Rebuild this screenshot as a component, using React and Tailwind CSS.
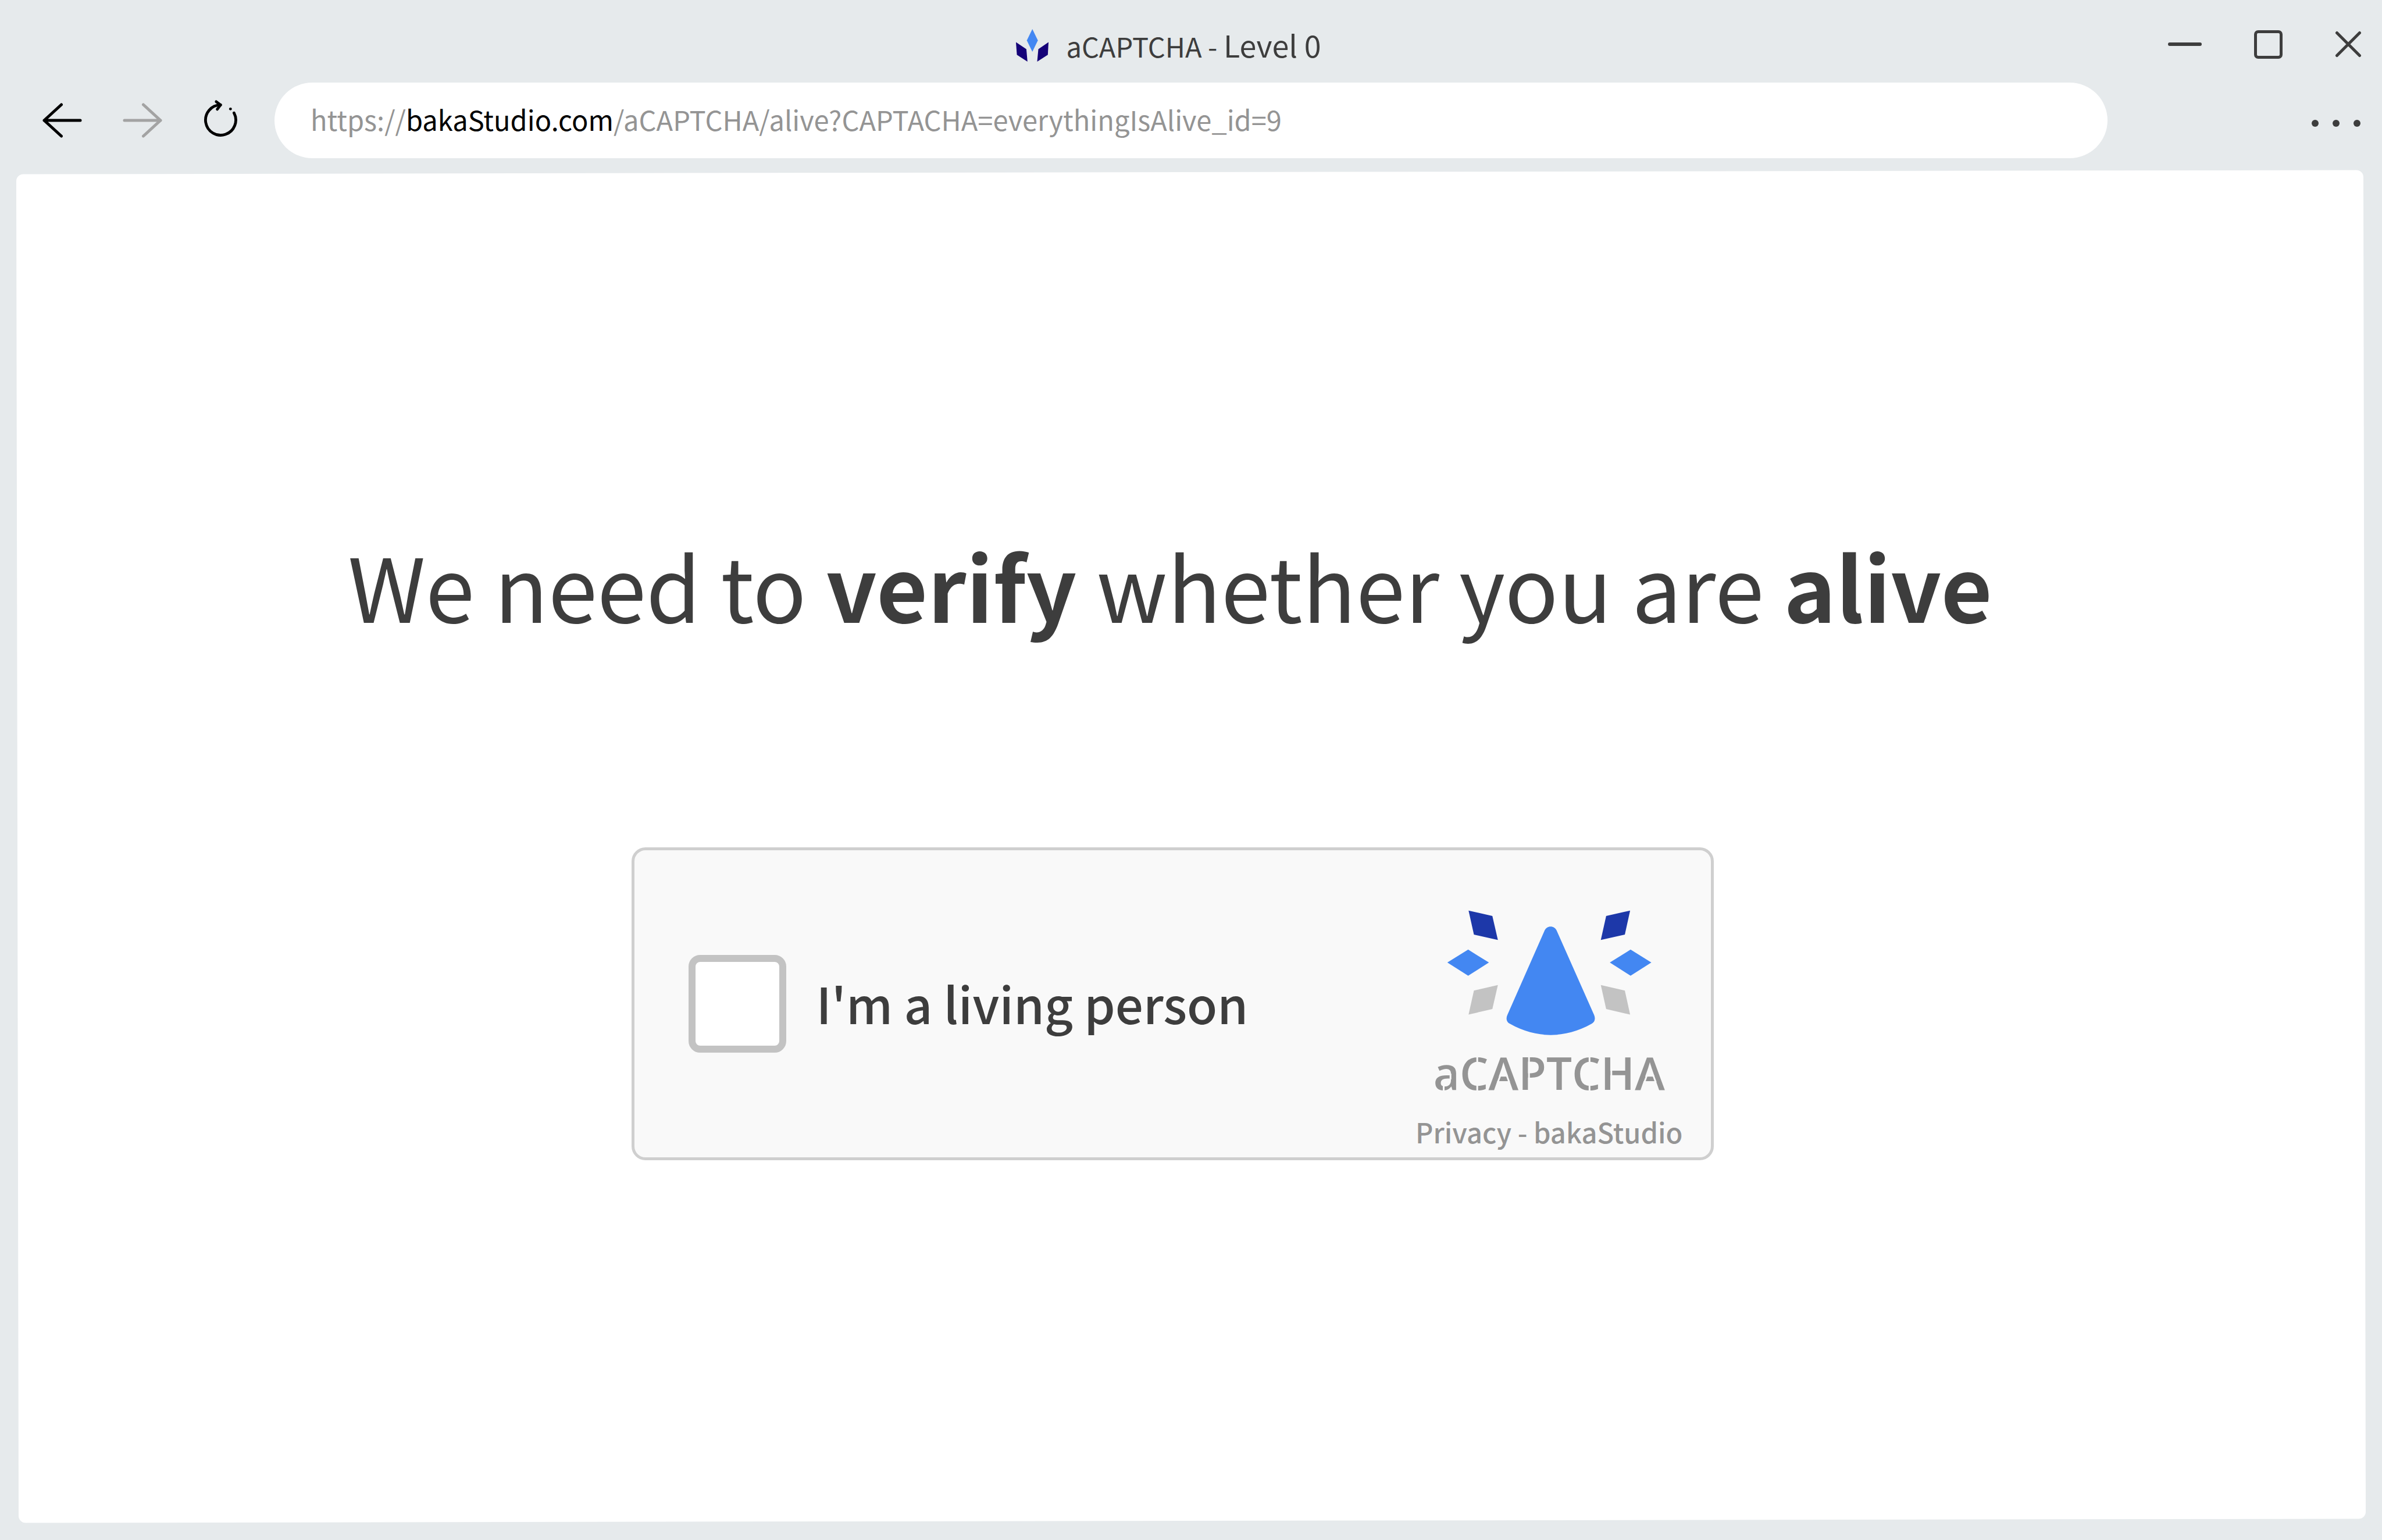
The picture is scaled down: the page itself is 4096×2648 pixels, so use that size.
const pageFont = '"Noto Sans CJK SC", "Noto Sans", sans-serif';

function TitleMark() {
  return (
    <svg width="56" height="56" viewBox="0 0 56 56" aria-hidden="true">
      <path d="M28.2 0L37.7 19.4 28.2 39.1 18.7 19.4Z" fill="#4387f2" />
      <path d="M0 22.5L17.9 34.4 19.8 56 1.6 44.2Z" fill="#150278" />
      <path d="M56 22.5L38.5 34.4 36.5 56 54.8 44.2Z" fill="#150278" />
    </svg>
  );
}

function ArrowIcon({ className }) {
  return (
    <svg
      className={className}
      width="68"
      height="60"
      viewBox="0 0 68 60"
      fill="none"
      stroke="currentColor"
      strokeWidth="5"
      strokeLinecap="round"
      strokeLinejoin="round"
      aria-hidden="true"
    >
      <path d="M65 30H3M32.500 3L3 30L32.500 57" />
    </svg>
  );
}

function ReloadIcon() {
  return (
    <svg
      width="60"
      height="72"
      viewBox="0 0 60 72"
      fill="none"
      stroke="currentColor"
      strokeWidth="4.800"
      strokeLinecap="round"
      strokeLinejoin="round"
      aria-hidden="true"
    >
      <path d="M53.400 23.200A26 26 0 1 1 30.400 9.400" />
      <path d="M22.800 3.800L30.200 9.400L24.600 16.900" />
      <circle cx="47.300" cy="16.300" r="2.400" fill="currentColor" stroke="none" />
    </svg>
  );
}

function Emblem() {
  return (
    <svg width="352" height="215" viewBox="0 0 352 215" aria-hidden="true">
      <g fill="#1d38a9">
        <path d="M37.300 .7L78.200 10 87.700 51.300 46.500 42Z" />
        <path d="M315.100 .7L273.900 10 264.700 51.300 306 42Z" />
      </g>
      <g fill="#4387f2">
        <path d="M.8 90.100L36.600 67.800 72.300 90.100 36.600 112.700Z" />
        <path d="M280.200 90.100L315.900 67.800 351.600 90.100 315.900 112.700Z" />
        <path d="M167.500 36.200C171.500 25.700 185.300 25.700 189.300 36.200L253.200 180.200C256 187 254 193 248.500 195.600C204 221 153 221 108.800 195.600C103 193 101 187 104 180.200Z" />
      </g>
      <g fill="#c3c3c3">
        <path d="M87.700 128.800L46.500 138.200 37.300 179.500 78.200 170.100Z" />
        <path d="M264.700 128.800L306 138.200 315.100 179.500 273.900 170.100Z" />
      </g>
    </svg>
  );
}

function TitleBar() {
  return (
    <header className="grid h-[142px] grid-cols-[1fr_auto_1fr] items-center pt-[14px] pr-[35px]">
      <span />
      <h1 className="flex items-center gap-[30px] pr-[42px] text-[47px] leading-[60px]">
        <TitleMark />
        <span>
          aCAPTCHA - <span className="text-[52px]">Level 0</span>
        </span>
      </h1>
      <div className="flex items-center justify-end gap-[90px] pb-1">
        <button type="button" aria-label="Minimize">
          <span className="block h-[6px] w-[58px] rounded-full bg-[#3d3d3d]" />
        </button>
        <button type="button" aria-label="Maximize">
          <span className="block size-[49px] rounded-[7px] border-[5px] border-[#3d3d3d]" />
        </button>
        <button type="button" aria-label="Close">
          <svg width="46" height="46" viewBox="0 0 46 46" stroke="currentColor" strokeWidth="5" strokeLinecap="round">
            <path d="M3.500 3.500L42.500 42.500M42.500 3.500L3.500 42.500" />
          </svg>
        </button>
      </div>
    </header>
  );
}

function Toolbar() {
  return (
    <nav className="flex h-[130px] items-center pr-[37px] pl-[73px]">
      <div className="flex items-center gap-[70px] text-black">
        <button type="button" aria-label="Back">
          <ArrowIcon />
        </button>
        <button type="button" aria-label="Forward" disabled className="text-[#a3a3a3]">
          <ArrowIcon className="rotate-180" />
        </button>
        <button type="button" aria-label="Reload">
          <ReloadIcon />
        </button>
      </div>
      <div className="relative mr-[351px] ml-[63px] flex h-full flex-1 items-center rounded-full bg-white pb-[5px] pl-[62px]">
        <label htmlFor="address" className="text-[47px] leading-[60px] whitespace-nowrap text-[#949494]">
          https://<span className="text-black">bakaStudio.com</span>
          /aCAPTCHA/alive?CAPTACHA=everythingIsAlive_id=9
        </label>
        <input
          id="address"
          type="text"
          className="absolute inset-0 size-full rounded-full bg-transparent px-[62px] text-[47px] text-black outline-none focus:bg-white"
        />
      </div>
      <button type="button" aria-label="Menu" className="flex gap-6 pt-[10px]">
        <span className="size-3 rounded-full bg-[#3d3d3d]" />
        <span className="size-3 rounded-full bg-[#3d3d3d]" />
        <span className="size-3 rounded-full bg-[#3d3d3d]" />
      </button>
    </nav>
  );
}

function LogoText() {
  return (
    <p className="relative font-['Open_Sans',sans-serif] text-[78px] leading-[72px] font-semibold text-[#949494]">
      aCAPTCHA
      {/* Stencil bridges cut through the strokes */}
      <svg
        className="absolute inset-0"
        width="410"
        height="72"
        viewBox="0 0 410 72"
        fill="none"
        stroke="#f9f9f9"
        strokeWidth="3"
        aria-hidden="true"
      >
        <path d="M17.500 56V70M29.200 38V48" />
        <path d="M75.200 8V70M268.300 8V70" />
        <path d="M115 41L110.500 53M125.800 41L130.300 53" />
        <path d="M367 41L362.500 53M377.800 41L382.300 53" />
        <path d="M164.200 8V70M305.800 8V70" />
      </svg>
    </p>
  );
}

function CaptchaCard() {
  return (
    <section className="flex h-[538px] w-full max-w-[1861px] justify-between rounded-3xl border-[5px] border-[#cfcfcf] bg-[#f9f9f9] pr-[48px] pb-4 pl-[93px]">
      <div className="flex items-center gap-[52px] pt-4">
        <input
          id="alive"
          type="checkbox"
          className="size-[168px] appearance-none rounded-[20px] border-[12px] border-[#c3c3c3] bg-white checked:bg-[#4387f2]"
        />
        <label htmlFor="alive" className="pb-1 text-[85px] leading-[112px] font-medium">
          I'm a living person
        </label>
      </div>
      <div className="flex flex-col items-center justify-end">
        <Emblem />
        <div className="pt-7 pb-[38px]">
          <LogoText />
        </div>
        <p className="text-[47px] leading-[56px] font-medium text-[#949494]">
          <a href="#privacy">Privacy</a> - <a href="#studio">bakaStudio</a>
        </p>
      </div>
    </section>
  );
}

export default function App() {
  return (
    <div className="flex min-h-screen flex-col bg-[#e6eaec] text-[#3d3d3d]" style={{ fontFamily: pageFont }}>
      <TitleBar />
      <Toolbar />
      <main className="relative isolate mx-[30px] mt-6 mb-[33px] flex flex-1 flex-col items-center justify-center gap-[372px] pt-2 pr-16 before:absolute before:inset-0 before:-z-10 before:-rotate-[0.1deg] before:rounded-xl before:bg-white">
        <h2 className="pr-2 text-[152px] leading-[160px]">
          We need to <strong className="font-bold">verify</strong> whether you are{" "}
          <strong className="font-bold">alive</strong>
        </h2>
        <CaptchaCard />
      </main>
    </div>
  );
}
